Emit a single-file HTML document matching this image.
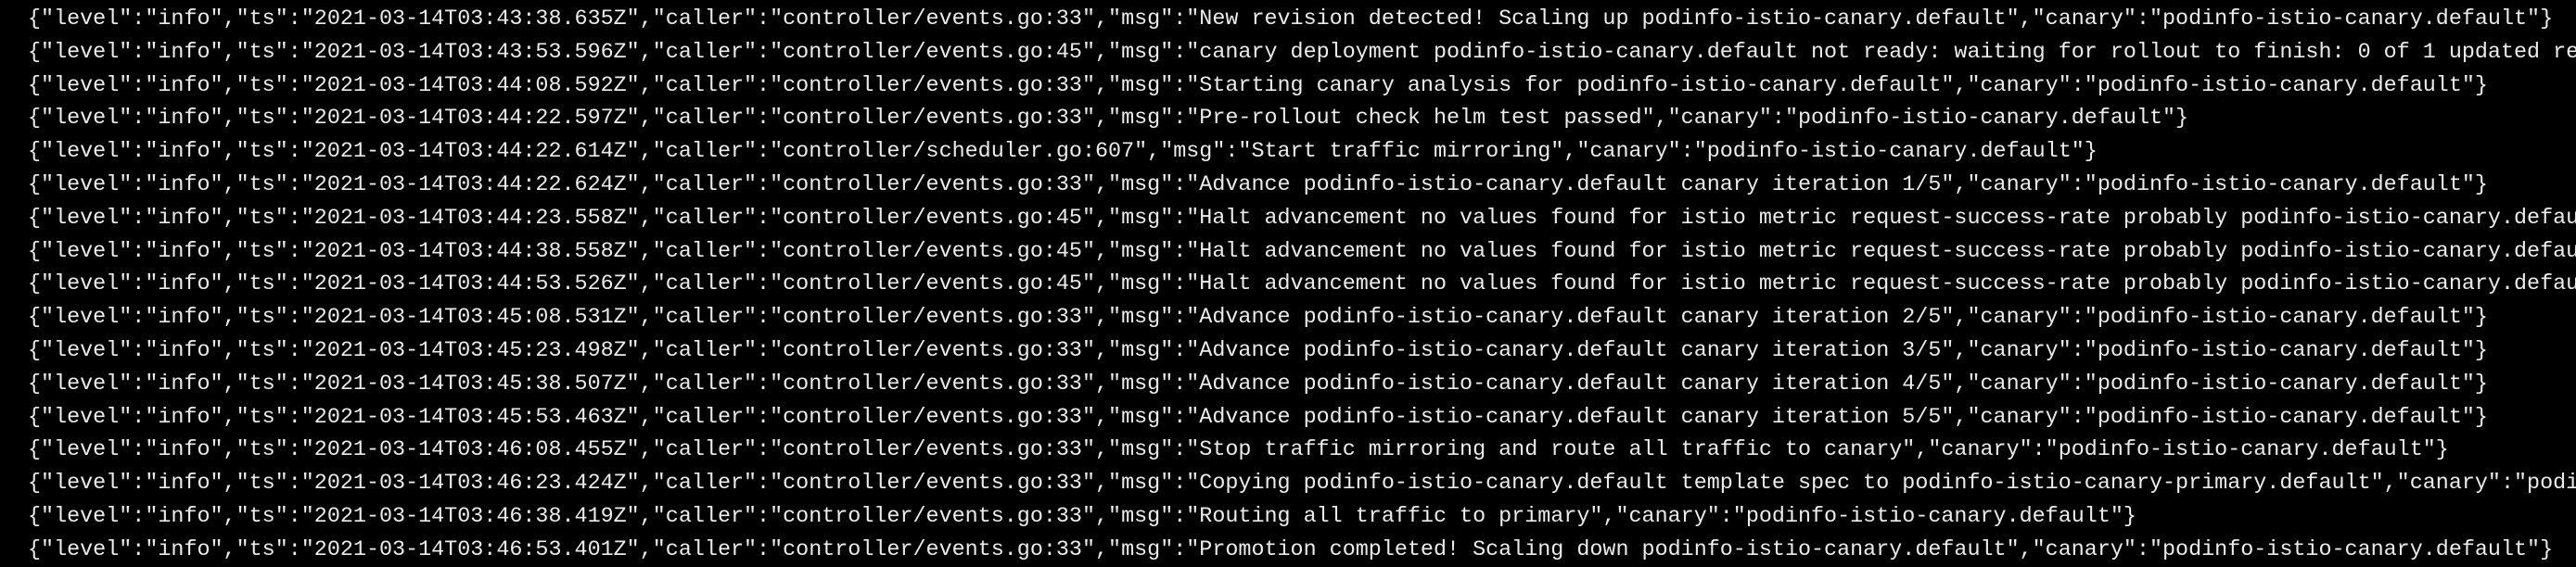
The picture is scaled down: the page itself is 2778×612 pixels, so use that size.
<!DOCTYPE html>
<html><head><meta charset="utf-8"><style>
html,body{margin:0;padding:0;background:#000;width:2778px;height:612px;overflow:hidden}
pre{margin:0;padding:4px 0 0 30px;width:2748px;height:608px;overflow:hidden;font-family:"Liberation Mono",monospace;font-size:23.4px;line-height:35.8px;color:#ececec;white-space:pre}
</style></head><body><pre>{"level":"info","ts":"2021-03-14T03:43:38.635Z","caller":"controller/events.go:33","msg":"New revision detected! Scaling up podinfo-istio-canary.default","canary":"podinfo-istio-canary.default"}
{"level":"info","ts":"2021-03-14T03:43:53.596Z","caller":"controller/events.go:45","msg":"canary deployment podinfo-istio-canary.default not ready: waiting for rollout to finish: 0 of 1 updated re
{"level":"info","ts":"2021-03-14T03:44:08.592Z","caller":"controller/events.go:33","msg":"Starting canary analysis for podinfo-istio-canary.default","canary":"podinfo-istio-canary.default"}
{"level":"info","ts":"2021-03-14T03:44:22.597Z","caller":"controller/events.go:33","msg":"Pre-rollout check helm test passed","canary":"podinfo-istio-canary.default"}
{"level":"info","ts":"2021-03-14T03:44:22.614Z","caller":"controller/scheduler.go:607","msg":"Start traffic mirroring","canary":"podinfo-istio-canary.default"}
{"level":"info","ts":"2021-03-14T03:44:22.624Z","caller":"controller/events.go:33","msg":"Advance podinfo-istio-canary.default canary iteration 1/5","canary":"podinfo-istio-canary.default"}
{"level":"info","ts":"2021-03-14T03:44:23.558Z","caller":"controller/events.go:45","msg":"Halt advancement no values found for istio metric request-success-rate probably podinfo-istio-canary.defau
{"level":"info","ts":"2021-03-14T03:44:38.558Z","caller":"controller/events.go:45","msg":"Halt advancement no values found for istio metric request-success-rate probably podinfo-istio-canary.defau
{"level":"info","ts":"2021-03-14T03:44:53.526Z","caller":"controller/events.go:45","msg":"Halt advancement no values found for istio metric request-success-rate probably podinfo-istio-canary.defau
{"level":"info","ts":"2021-03-14T03:45:08.531Z","caller":"controller/events.go:33","msg":"Advance podinfo-istio-canary.default canary iteration 2/5","canary":"podinfo-istio-canary.default"}
{"level":"info","ts":"2021-03-14T03:45:23.498Z","caller":"controller/events.go:33","msg":"Advance podinfo-istio-canary.default canary iteration 3/5","canary":"podinfo-istio-canary.default"}
{"level":"info","ts":"2021-03-14T03:45:38.507Z","caller":"controller/events.go:33","msg":"Advance podinfo-istio-canary.default canary iteration 4/5","canary":"podinfo-istio-canary.default"}
{"level":"info","ts":"2021-03-14T03:45:53.463Z","caller":"controller/events.go:33","msg":"Advance podinfo-istio-canary.default canary iteration 5/5","canary":"podinfo-istio-canary.default"}
{"level":"info","ts":"2021-03-14T03:46:08.455Z","caller":"controller/events.go:33","msg":"Stop traffic mirroring and route all traffic to canary","canary":"podinfo-istio-canary.default"}
{"level":"info","ts":"2021-03-14T03:46:23.424Z","caller":"controller/events.go:33","msg":"Copying podinfo-istio-canary.default template spec to podinfo-istio-canary-primary.default","canary":"podi
{"level":"info","ts":"2021-03-14T03:46:38.419Z","caller":"controller/events.go:33","msg":"Routing all traffic to primary","canary":"podinfo-istio-canary.default"}
{"level":"info","ts":"2021-03-14T03:46:53.401Z","caller":"controller/events.go:33","msg":"Promotion completed! Scaling down podinfo-istio-canary.default","canary":"podinfo-istio-canary.default"}</pre></body></html>
